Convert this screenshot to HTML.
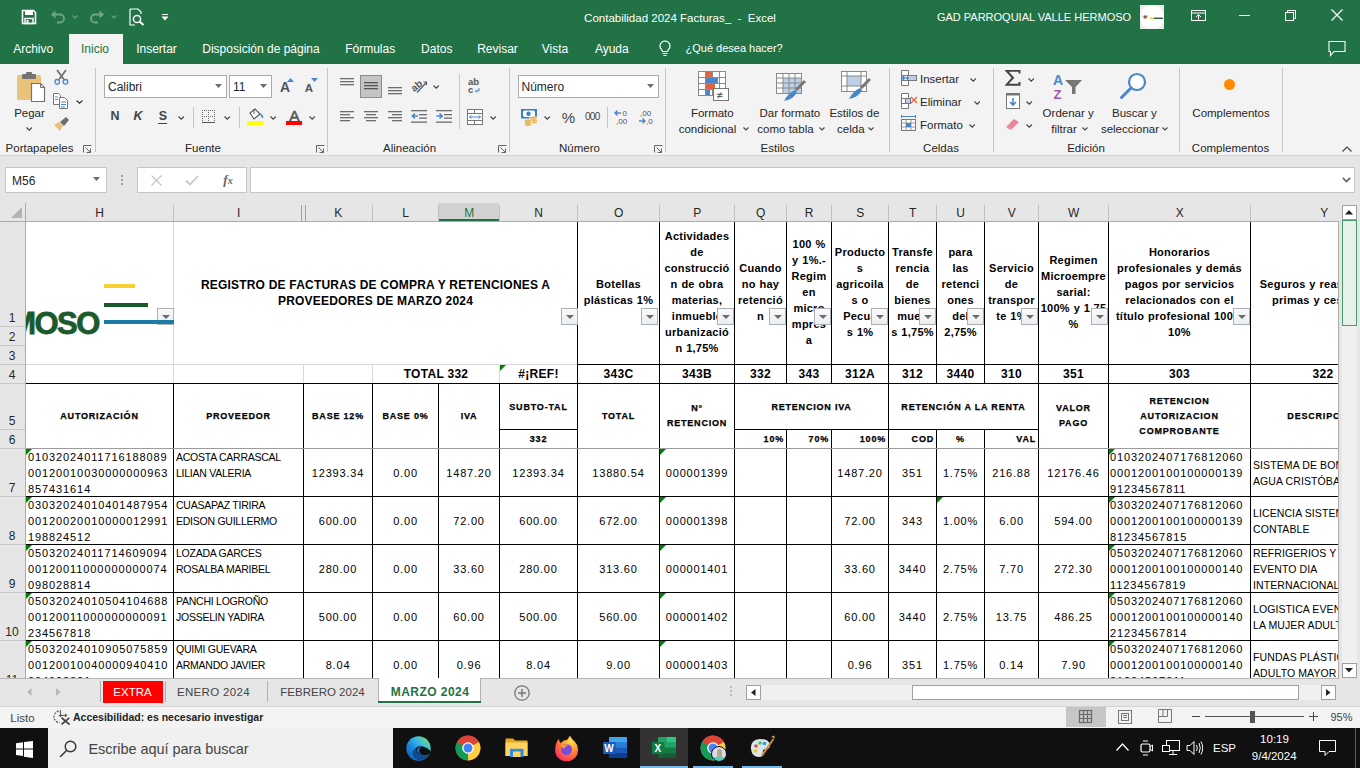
<!DOCTYPE html><html><head><meta charset="utf-8"><style>
*{margin:0;padding:0;box-sizing:border-box}
html,body{width:1360px;height:768px;overflow:hidden;background:#fff;font-family:"Liberation Sans",sans-serif;-webkit-font-smoothing:antialiased}
body{position:relative}
.a{position:absolute}
.t{position:absolute;white-space:nowrap;line-height:1}
.hl{position:absolute;height:1px}
.vl{position:absolute;width:1px}
.cell{position:absolute;display:flex;flex-direction:column;justify-content:center;overflow:hidden}
.cell div{white-space:nowrap}
.ctr{align-items:center;text-align:center}
.rgt{align-items:flex-end;text-align:right}
.lft{align-items:flex-start;text-align:left}
.hb{font-weight:bold;font-size:10px;color:#000}
.dd{position:absolute;width:17px;height:17px;background:linear-gradient(#fafafa,#eceef2);border:1px solid #a9b0b8}
.dd:after{content:"";position:absolute;left:4px;top:6px;border-left:4px solid transparent;border-right:4px solid transparent;border-top:4px solid #6d6d6d}
.tt{font-weight:bold;font-size:12px;letter-spacing:0.2px;color:#000}
.h1{font-weight:bold;font-size:11px;color:#000;letter-spacing:0.25px;word-spacing:0.5px}
.h4{font-weight:bold;font-size:12px;letter-spacing:0.3px;color:#000}
.h5{font-weight:bold;font-size:9px;letter-spacing:0.8px;color:#000;-webkit-text-stroke:0.25px #000}
.dd1{font-size:11px;letter-spacing:0.9px;color:#000}
.dn{font-size:10.5px;letter-spacing:-0.25px;color:#000}
.dv{font-size:11px;letter-spacing:0.8px;color:#000}
.tri{position:absolute;width:0;height:0;border-top:6px solid #008000;border-right:6px solid transparent}
</style></head><body>
<div class="a" style="left:0;top:0;width:1360px;height:64px;background:#217346"></div>
<div class="a" style="left:0;top:64px;width:1360px;height:92px;background:#f3f3f3"></div>
<div class="a" style="left:0;top:156px;width:1360px;height:47px;background:#e6e6e6"></div>
<div class="a" style="left:0;top:155px;width:1360px;height:1px;background:#d5d5d5"></div>
<svg class="a" style="left:21px;top:9px" width="16" height="16" viewBox="0 0 16 16"><path d="M1.5 1.5 H12.5 L14.5 3.5 V14.5 H1.5 Z" fill="none" stroke="#fff" stroke-width="1.6"/><rect x="4" y="1.5" width="8" height="4.5" fill="#fff"/><rect x="4" y="9.5" width="8" height="5" fill="none" stroke="#fff" stroke-width="1.4"/><rect x="5.5" y="11" width="2" height="3.5" fill="#fff"/></svg><svg class="a" style="left:50px;top:9px" width="16" height="15" viewBox="0 0 16 15"><path d="M3 5.5 H10 A4 4 0 0 1 10 13.5 H7" fill="none" stroke="#6fa584" stroke-width="1.8"/><path d="M1 5.5 L5.5 1.5 V9.5 Z" fill="#6fa584"/></svg><svg class="a" style="left:72px;top:15px" width="6" height="4" viewBox="0 0 6 4"><path d="M0.5 0.5 L3.0 3 L5.5 0.5" fill="none" stroke="#6fa584" stroke-width="1.1"/></svg><svg class="a" style="left:89px;top:9px" width="16" height="15" viewBox="0 0 16 15"><path d="M13 5.5 H6 A4 4 0 0 0 6 13.5 H9" fill="none" stroke="#6fa584" stroke-width="1.8"/><path d="M15 5.5 L10.5 1.5 V9.5 Z" fill="#6fa584"/></svg><svg class="a" style="left:111px;top:15px" width="6" height="4" viewBox="0 0 6 4"><path d="M0.5 0.5 L3.0 3 L5.5 0.5" fill="none" stroke="#6fa584" stroke-width="1.1"/></svg><svg class="a" style="left:129px;top:8px" width="16" height="18" viewBox="0 0 16 18"><path d="M1 1 H9 L12 4 V6" fill="none" stroke="#fff" stroke-width="1.2"/><path d="M1 1 V17 H6" fill="none" stroke="#fff" stroke-width="1.2"/><circle cx="8" cy="11" r="3.6" fill="none" stroke="#fff" stroke-width="1.5"/><path d="M10.5 13.5 L14.5 17" stroke="#fff" stroke-width="1.8"/></svg><div class="a" style="left:162px;top:14px;width:6px;height:1px;background:#fff;"></div><svg class="a" style="left:161px;top:16px" width="8" height="5" viewBox="0 0 8 5"><path d="M0.5 0.5 H7.5 L4 4.5 Z" fill="#fff"/></svg><div class="t" style="left:480px;width:400px;text-align:center;top:9.5px;line-height:16px;font-size:11.5px;color:#fff;font-weight:normal;letter-spacing:0px;">Contabilidad 2024 Facturas_&nbsp; -&nbsp; Excel</div><div class="t" style="left:834px;width:400px;text-align:center;top:10.0px;line-height:15px;font-size:11px;color:#fff;font-weight:normal;letter-spacing:0px;">GAD PARROQUIAL VALLE HERMOSO</div><div class="a" style="left:1140px;top:5px;width:24px;height:24px;background:#ececec;"></div><div class="a" style="left:1140px;top:5px;width:24px;height:24px;border-radius:50%;background:#fff"></div><svg class="a" style="left:1141px;top:14px" width="23" height="7" viewBox="0 0 23 7"><circle cx="4.3" cy="3" r="1.8" fill="#a0522d"/><path d="M1 1 Q1.5 4 4 4.5 Q6.5 4 7 1" fill="none" stroke="#8fb79a" stroke-width="0.7"/><rect x="9" y="3.6" width="4" height="1.3" fill="#f5c518"/><rect x="13" y="3.6" width="9" height="1.3" fill="#1a4d2a"/></svg><svg class="a" style="left:1191px;top:10px" width="15" height="11" viewBox="0 0 15 11"><rect x="0.5" y="0.5" width="14" height="10" fill="none" stroke="#fff"/><path d="M0.5 3 H14.5" stroke="#fff"/><path d="M7.5 9.5 V5 M5 7 L7.5 4.5 L10 7" fill="none" stroke="#fff"/></svg><div class="a" style="left:1239px;top:15px;width:11px;height:1px;background:#fff;"></div><svg class="a" style="left:1285px;top:10px" width="12" height="11" viewBox="0 0 12 11"><rect x="0.5" y="2.5" width="8" height="8" fill="none" stroke="#fff"/><path d="M2.5 2.5 V0.5 H10.5 V8.5 H8.5" fill="none" stroke="#fff"/></svg><svg class="a" style="left:1331px;top:9px" width="12" height="12" viewBox="0 0 12 12"><path d="M0.5 0.5 L11.5 11.5 M11.5 0.5 L0.5 11.5" stroke="#fff" stroke-width="1.2"/></svg><div class="a" style="left:69px;top:34px;width:54px;height:30px;background:#f3f3f3;"></div><div class="t" style="left:-166.8px;width:400px;text-align:center;top:40.5px;line-height:16px;font-size:12px;color:#fff;font-weight:normal;letter-spacing:0px;">Archivo</div><div class="t" style="left:-105px;width:400px;text-align:center;top:40.5px;line-height:16px;font-size:12px;color:#217346;font-weight:normal;letter-spacing:0px;">Inicio</div><div class="t" style="left:-43.5px;width:400px;text-align:center;top:40.5px;line-height:16px;font-size:12px;color:#fff;font-weight:normal;letter-spacing:0px;">Insertar</div><div class="t" style="left:61px;width:400px;text-align:center;top:40.5px;line-height:16px;font-size:12px;color:#fff;font-weight:normal;letter-spacing:0px;">Disposición de página</div><div class="t" style="left:170.2px;width:400px;text-align:center;top:40.5px;line-height:16px;font-size:12px;color:#fff;font-weight:normal;letter-spacing:0px;">Fórmulas</div><div class="t" style="left:236.8px;width:400px;text-align:center;top:40.5px;line-height:16px;font-size:12px;color:#fff;font-weight:normal;letter-spacing:0px;">Datos</div><div class="t" style="left:297.5px;width:400px;text-align:center;top:40.5px;line-height:16px;font-size:12px;color:#fff;font-weight:normal;letter-spacing:0px;">Revisar</div><div class="t" style="left:355px;width:400px;text-align:center;top:40.5px;line-height:16px;font-size:12px;color:#fff;font-weight:normal;letter-spacing:0px;">Vista</div><div class="t" style="left:411.79999999999995px;width:400px;text-align:center;top:40.5px;line-height:16px;font-size:12px;color:#fff;font-weight:normal;letter-spacing:0px;">Ayuda</div><svg class="a" style="left:659px;top:40px" width="12" height="17" viewBox="0 0 12 17"><path d="M6 1 A5 5 0 0 1 9.5 9.5 L8.5 11.5 H3.5 L2.5 9.5 A5 5 0 0 1 6 1 Z" fill="none" stroke="#fff" stroke-width="1.2"/><path d="M3.5 13.5 H8.5 M4.5 15.5 H7.5" stroke="#fff" stroke-width="1.2"/></svg><div class="t" style="left:685.5px;top:41.0px;line-height:15px;font-size:11px;color:#fff;font-weight:normal;letter-spacing:0px;">¿Qué desea hacer?</div><svg class="a" style="left:1328px;top:40px" width="18" height="17" viewBox="0 0 18 17"><path d="M1 1.5 H17 V11.5 H6 L2.5 15.5 V11.5 H1 Z" fill="none" stroke="#fff" stroke-width="1.1"/></svg>
<div class="a" style="left:95px;top:68px;width:1px;height:84px;background:#c6c6c6;"></div><div class="a" style="left:327px;top:68px;width:1px;height:84px;background:#c6c6c6;"></div><div class="a" style="left:509px;top:68px;width:1px;height:84px;background:#c6c6c6;"></div><div class="a" style="left:665px;top:68px;width:1px;height:84px;background:#c6c6c6;"></div><div class="a" style="left:889px;top:68px;width:1px;height:84px;background:#c6c6c6;"></div><div class="a" style="left:993px;top:68px;width:1px;height:84px;background:#c6c6c6;"></div><div class="a" style="left:1179px;top:68px;width:1px;height:84px;background:#c6c6c6;"></div><div class="a" style="left:1282px;top:68px;width:1px;height:84px;background:#c6c6c6;"></div><div class="t" style="left:-160.5px;width:400px;text-align:center;top:140.0px;line-height:16px;font-size:11.5px;color:#262626;font-weight:normal;letter-spacing:0px;">Portapapeles</div><div class="t" style="left:3px;width:400px;text-align:center;top:140.0px;line-height:16px;font-size:11.5px;color:#262626;font-weight:normal;letter-spacing:0px;">Fuente</div><div class="t" style="left:209.60000000000002px;width:400px;text-align:center;top:140.0px;line-height:16px;font-size:11.5px;color:#262626;font-weight:normal;letter-spacing:0px;">Alineación</div><div class="t" style="left:379.5px;width:400px;text-align:center;top:140.0px;line-height:16px;font-size:11.5px;color:#262626;font-weight:normal;letter-spacing:0px;">Número</div><div class="t" style="left:577.5px;width:400px;text-align:center;top:140.0px;line-height:16px;font-size:11.5px;color:#262626;font-weight:normal;letter-spacing:0px;">Estilos</div><div class="t" style="left:741px;width:400px;text-align:center;top:140.0px;line-height:16px;font-size:11.5px;color:#262626;font-weight:normal;letter-spacing:0px;">Celdas</div><div class="t" style="left:886px;width:400px;text-align:center;top:140.0px;line-height:16px;font-size:11.5px;color:#262626;font-weight:normal;letter-spacing:0px;">Edición</div><div class="t" style="left:1030.5px;width:400px;text-align:center;top:140.0px;line-height:16px;font-size:11.5px;color:#262626;font-weight:normal;letter-spacing:0px;">Complementos</div><svg class="a" style="left:83px;top:145px" width="9" height="8" viewBox="0 0 9 8"><path d="M0.5 7.5 V0.5 H8.5" fill="none" stroke="#666"/><path d="M2.5 2.5 L7.5 7.5 M7.5 3.5 V7.5 H3.5" fill="none" stroke="#666"/></svg><svg class="a" style="left:316px;top:145px" width="9" height="8" viewBox="0 0 9 8"><path d="M0.5 7.5 V0.5 H8.5" fill="none" stroke="#666"/><path d="M2.5 2.5 L7.5 7.5 M7.5 3.5 V7.5 H3.5" fill="none" stroke="#666"/></svg><svg class="a" style="left:498px;top:145px" width="9" height="8" viewBox="0 0 9 8"><path d="M0.5 7.5 V0.5 H8.5" fill="none" stroke="#666"/><path d="M2.5 2.5 L7.5 7.5 M7.5 3.5 V7.5 H3.5" fill="none" stroke="#666"/></svg><svg class="a" style="left:654px;top:145px" width="9" height="8" viewBox="0 0 9 8"><path d="M0.5 7.5 V0.5 H8.5" fill="none" stroke="#666"/><path d="M2.5 2.5 L7.5 7.5 M7.5 3.5 V7.5 H3.5" fill="none" stroke="#666"/></svg><svg class="a" style="left:1342px;top:146px" width="10" height="6" viewBox="0 0 10 6"><path d="M0.5 5.5 L5 1 L9.5 5.5" fill="none" stroke="#444" stroke-width="1.2"/></svg><svg class="a" style="left:16px;top:72px" width="30" height="31" viewBox="0 0 30 31"><rect x="1" y="3" width="24" height="25" rx="1.5" fill="#ebc27a"/><rect x="6" y="2" width="14" height="5" rx="1" fill="#737373"/><rect x="10" y="0" width="6" height="4" rx="1" fill="#737373"/><path d="M15.5 11.5 H24.5 L28.5 15.5 V29.5 H15.5 Z" fill="#fff" stroke="#737373" stroke-width="1.2"/><path d="M24.5 11.5 V15.5 H28.5" fill="none" stroke="#737373" stroke-width="1"/></svg><div class="t" style="left:-170.5px;width:400px;text-align:center;top:104.6px;line-height:16px;font-size:11.5px;color:#262626;font-weight:normal;letter-spacing:0px;">Pegar</div><svg class="a" style="left:25.5px;top:126.5px" width="6.5" height="4.2" viewBox="0 0 6.5 4.2"><path d="M0.5 0.5 L3.25 3.2 L6.0 0.5" fill="none" stroke="#444" stroke-width="1.1"/></svg><svg class="a" style="left:54px;top:69px" width="15" height="16" viewBox="0 0 15 16"><path d="M3 1 L10 10.5 M12 1 L5 10.5" stroke="#6d6d6d" stroke-width="1.7"/><circle cx="3.2" cy="12.8" r="2.3" fill="none" stroke="#4a86c8" stroke-width="1.3"/><circle cx="11.5" cy="12.8" r="2.3" fill="none" stroke="#4a86c8" stroke-width="1.3"/></svg><svg class="a" style="left:53px;top:93px" width="16" height="16" viewBox="0 0 16 16"><path d="M0.5 0.5 H5.5 L7.5 2.5 V11.5 H0.5 Z" fill="#fff" stroke="#777"/><path d="M6.5 4.5 H11.5 L14.5 7.5 V15.5 H6.5 Z" fill="#fff" stroke="#777"/><path d="M2 4 H5 M2 6.5 H5 M8 9 H13 M8 11.5 H13 M8 14 H12" stroke="#4a86c8" stroke-width="1"/></svg><svg class="a" style="left:75.5px;top:99.5px" width="7" height="4.2" viewBox="0 0 7 4.2"><path d="M0.5 0.5 L3.5 3.2 L6.5 0.5" fill="none" stroke="#333" stroke-width="1.1"/></svg><svg class="a" style="left:53px;top:116px" width="17" height="15" viewBox="0 0 17 15"><path d="M1 9 L6 6 L10 10 L7 15 Z" fill="#e8c07a"/><path d="M7 6 L13 1 L16 4 L11 10 Z" fill="#6d6d6d"/></svg><div class="a" style="left:104px;top:75px;width:123px;height:23px;background:#fff;border:1px solid #ababab"></div><div class="t" style="left:108px;top:78.5px;line-height:16px;font-size:12px;color:#262626;font-weight:normal;letter-spacing:0px;">Calibri</div><svg class="a" style="left:215px;top:84px" width="8" height="5" viewBox="0 0 8 5"><path d="M0 0 H7 L3.5 4 Z" fill="#6d6d6d"/></svg><div class="a" style="left:229px;top:75px;width:43px;height:23px;background:#fff;border:1px solid #ababab"></div><div class="t" style="left:233px;top:78.5px;line-height:16px;font-size:12px;color:#262626;font-weight:normal;letter-spacing:0px;">11</div><svg class="a" style="left:260px;top:84px" width="8" height="5" viewBox="0 0 8 5"><path d="M0 0 H7 L3.5 4 Z" fill="#6d6d6d"/></svg><div class="t" style="left:85px;width:400px;text-align:center;top:77.5px;line-height:19px;font-size:14px;color:#555;font-weight:normal;letter-spacing:0px;font-weight:bold;">A</div><svg class="a" style="left:287px;top:78px" width="7" height="4" viewBox="0 0 7 4"><path d="M0 4 L3.5 0 L7 4 Z" fill="#4a86c8"/></svg><div class="t" style="left:108.80000000000001px;width:400px;text-align:center;top:80.0px;line-height:16px;font-size:11.5px;color:#555;font-weight:normal;letter-spacing:0px;font-weight:bold;">A</div><svg class="a" style="left:311px;top:78px" width="7" height="4" viewBox="0 0 7 4"><path d="M0 0 L3.5 4 L7 0 Z" fill="#4a86c8"/></svg><div class="t" style="left:-85px;width:400px;text-align:center;top:108.0px;line-height:17px;font-size:12.5px;color:#444;font-weight:bold;letter-spacing:0px;">N</div><div class="t" style="left:-62px;width:400px;text-align:center;top:108.0px;line-height:17px;font-size:12.5px;color:#444;font-weight:bold;letter-spacing:0px;font-style:italic;">K</div><div class="t" style="left:-37px;width:400px;text-align:center;top:107.5px;line-height:17px;font-size:12.5px;color:#444;font-weight:bold;letter-spacing:0px;">S</div><div class="a" style="left:158px;top:123px;width:9px;height:1px;background:#444;"></div><svg class="a" style="left:178px;top:115.5px" width="6.5" height="4.2" viewBox="0 0 6.5 4.2"><path d="M0.5 0.5 L3.25 3.2 L6.0 0.5" fill="none" stroke="#444" stroke-width="1.1"/></svg><div class="a" style="left:193px;top:107px;width:1px;height:21px;background:#c6c6c6;"></div><svg class="a" style="left:202px;top:110px" width="14" height="14" viewBox="0 0 14 14"><rect x="0" y="0" width="1" height="1" fill="#6a6a6a"/><rect x="0" y="2" width="1" height="1" fill="#6a6a6a"/><rect x="0" y="4" width="1" height="1" fill="#6a6a6a"/><rect x="0" y="6" width="1" height="1" fill="#6a6a6a"/><rect x="0" y="8" width="1" height="1" fill="#6a6a6a"/><rect x="0" y="10" width="1" height="1" fill="#6a6a6a"/><rect x="2" y="0" width="1" height="1" fill="#6a6a6a"/><rect x="2" y="6" width="1" height="1" fill="#6a6a6a"/><rect x="4" y="0" width="1" height="1" fill="#6a6a6a"/><rect x="4" y="6" width="1" height="1" fill="#6a6a6a"/><rect x="6" y="0" width="1" height="1" fill="#6a6a6a"/><rect x="6" y="2" width="1" height="1" fill="#6a6a6a"/><rect x="6" y="4" width="1" height="1" fill="#6a6a6a"/><rect x="6" y="6" width="1" height="1" fill="#6a6a6a"/><rect x="6" y="8" width="1" height="1" fill="#6a6a6a"/><rect x="6" y="10" width="1" height="1" fill="#6a6a6a"/><rect x="8" y="0" width="1" height="1" fill="#6a6a6a"/><rect x="8" y="6" width="1" height="1" fill="#6a6a6a"/><rect x="10" y="0" width="1" height="1" fill="#6a6a6a"/><rect x="10" y="6" width="1" height="1" fill="#6a6a6a"/><rect x="12" y="0" width="1" height="1" fill="#6a6a6a"/><rect x="12" y="2" width="1" height="1" fill="#6a6a6a"/><rect x="12" y="4" width="1" height="1" fill="#6a6a6a"/><rect x="12" y="6" width="1" height="1" fill="#6a6a6a"/><rect x="12" y="8" width="1" height="1" fill="#6a6a6a"/><rect x="12" y="10" width="1" height="1" fill="#6a6a6a"/><rect x="0" y="12" width="13" height="1" fill="#555"/></svg><svg class="a" style="left:223.5px;top:115.5px" width="6.5" height="4.2" viewBox="0 0 6.5 4.2"><path d="M0.5 0.5 L3.25 3.2 L6.0 0.5" fill="none" stroke="#444" stroke-width="1.1"/></svg><div class="a" style="left:239px;top:107px;width:1px;height:21px;background:#c6c6c6;"></div><svg class="a" style="left:246px;top:108px" width="18" height="17" viewBox="0 0 18 17"><path d="M4 5 L9 1 L14 6 L8 11 Z" fill="#fff" stroke="#555" stroke-width="1.1"/><path d="M8 1 V6" stroke="#555"/><path d="M14 6 Q17 7 16.5 10" fill="#4a86c8" stroke="#4a86c8" stroke-width="1.3"/><rect x="1" y="13" width="16" height="4" fill="#ffff00"/></svg><svg class="a" style="left:269.5px;top:115.5px" width="6.5" height="4.2" viewBox="0 0 6.5 4.2"><path d="M0.5 0.5 L3.25 3.2 L6.0 0.5" fill="none" stroke="#444" stroke-width="1.1"/></svg><div class="t" style="left:94.5px;width:400px;text-align:center;top:105.0px;line-height:21px;font-size:15.5px;color:#555;font-weight:normal;letter-spacing:0px;-webkit-text-stroke:0.5px #555;">A</div><div class="a" style="left:286px;top:121px;width:16px;height:4px;background:#ff0000;"></div><svg class="a" style="left:308.5px;top:115.5px" width="6.5" height="4.2" viewBox="0 0 6.5 4.2"><path d="M0.5 0.5 L3.25 3.2 L6.0 0.5" fill="none" stroke="#444" stroke-width="1.1"/></svg><svg class="a" style="left:340px;top:78px" width="16" height="10" viewBox="0 0 16 10"><rect x="0" y="0" width="14" height="1.3" fill="#6d6d6d"/><rect x="0" y="3" width="14" height="1.3" fill="#6d6d6d"/><rect x="0" y="6" width="14" height="1.3" fill="#6d6d6d"/></svg><div class="a" style="left:360px;top:75px;width:22px;height:23px;background:#c5c5c5;border:1px solid #8d8d8d"></div><svg class="a" style="left:364px;top:82px" width="16" height="10" viewBox="0 0 16 10"><rect x="0" y="0" width="14" height="1.3" fill="#555"/><rect x="0" y="3" width="14" height="1.3" fill="#555"/><rect x="0" y="6" width="14" height="1.3" fill="#555"/></svg><svg class="a" style="left:388px;top:87px" width="16" height="10" viewBox="0 0 16 10"><rect x="0" y="0" width="14" height="1.3" fill="#6d6d6d"/><rect x="0" y="3" width="14" height="1.3" fill="#6d6d6d"/><rect x="0" y="6" width="14" height="1.3" fill="#6d6d6d"/></svg><svg class="a" style="left:411px;top:78px" width="18" height="16" viewBox="0 0 18 16"><text x="0" y="11" font-family="Liberation Sans" font-size="10" font-weight="bold" fill="#555" transform="rotate(-40 6 8)">ab</text><path d="M6 14.5 L15.5 4.5 M12.5 4 H15.5 V7" fill="none" stroke="#555" stroke-width="1.1"/></svg><svg class="a" style="left:432.5px;top:85px" width="6.5" height="4.2" viewBox="0 0 6.5 4.2"><path d="M0.5 0.5 L3.25 3.2 L6.0 0.5" fill="none" stroke="#444" stroke-width="1.1"/></svg><div class="a" style="left:459px;top:74px;width:1px;height:55px;background:#c6c6c6;"></div><svg class="a" style="left:468px;top:78px" width="14" height="16" viewBox="0 0 14 16"><text x="0" y="7" font-family="Liberation Sans" font-weight="bold" font-size="9.5" fill="#555">ab</text><text x="0" y="14.5" font-family="Liberation Sans" font-weight="bold" font-size="9.5" fill="#555">c</text><path d="M11 10 V13 H7.5 M9 11.5 L7.5 13 L9 14.5" fill="none" stroke="#4a86c8" stroke-width="1"/></svg><svg class="a" style="left:340px;top:111px" width="16" height="13" viewBox="0 0 16 13"><rect x="0" y="0" width="14" height="1.3" fill="#6d6d6d"/><rect x="0" y="3" width="10" height="1.3" fill="#6d6d6d"/><rect x="0" y="6" width="14" height="1.3" fill="#6d6d6d"/><rect x="0" y="9" width="10" height="1.3" fill="#6d6d6d"/></svg><svg class="a" style="left:364px;top:111px" width="16" height="13" viewBox="0 0 16 13"><rect x="0" y="0" width="14" height="1.3" fill="#6d6d6d"/><rect x="2" y="3" width="10" height="1.3" fill="#6d6d6d"/><rect x="0" y="6" width="14" height="1.3" fill="#6d6d6d"/><rect x="2" y="9" width="10" height="1.3" fill="#6d6d6d"/></svg><svg class="a" style="left:388px;top:111px" width="16" height="13" viewBox="0 0 16 13"><rect x="0" y="0" width="14" height="1.3" fill="#6d6d6d"/><rect x="4" y="3" width="10" height="1.3" fill="#6d6d6d"/><rect x="0" y="6" width="14" height="1.3" fill="#6d6d6d"/><rect x="4" y="9" width="10" height="1.3" fill="#6d6d6d"/></svg><svg class="a" style="left:411px;top:110px" width="17" height="13" viewBox="0 0 17 13"><rect x="0" y="0" width="16" height="1.3" fill="#6d6d6d"/><rect x="8" y="4" width="8" height="1.3" fill="#6d6d6d"/><rect x="8" y="7.5" width="8" height="1.3" fill="#6d6d6d"/><rect x="0" y="11.5" width="16" height="1.3" fill="#6d6d6d"/><path d="M1 6 H7 M4 3.5 L1.3 6 L4 8.5" fill="none" stroke="#4a86c8" stroke-width="1.6"/></svg><svg class="a" style="left:436px;top:110px" width="17" height="13" viewBox="0 0 17 13"><rect x="0" y="0" width="16" height="1.3" fill="#6d6d6d"/><rect x="8" y="4" width="8" height="1.3" fill="#6d6d6d"/><rect x="8" y="7.5" width="8" height="1.3" fill="#6d6d6d"/><rect x="0" y="11.5" width="16" height="1.3" fill="#6d6d6d"/><path d="M0.5 6 H6.5 M3.5 3.5 L6.2 6 L3.5 8.5" fill="none" stroke="#4a86c8" stroke-width="1.6"/></svg><svg class="a" style="left:467px;top:109px" width="16" height="16" viewBox="0 0 16 16"><rect x="0.5" y="0.5" width="15" height="15" fill="#fff" stroke="#777"/><path d="M0.5 4.5 H15.5 M0.5 11.5 H15.5 M7.5 0.5 V4.5 M7.5 11.5 V15.5" stroke="#777"/><path d="M2.5 8 H13.5 M4.5 6.3 L2.5 8 L4.5 9.7 M11.5 6.3 L13.5 8 L11.5 9.7" fill="none" stroke="#4a86c8" stroke-width="1"/></svg><svg class="a" style="left:489.5px;top:115.5px" width="6.5" height="4.2" viewBox="0 0 6.5 4.2"><path d="M0.5 0.5 L3.25 3.2 L6.0 0.5" fill="none" stroke="#444" stroke-width="1.1"/></svg><div class="a" style="left:518px;top:75px;width:141px;height:23px;background:#fff;border:1px solid #ababab"></div><div class="t" style="left:521.5px;top:78.5px;line-height:16px;font-size:12px;color:#262626;font-weight:normal;letter-spacing:0px;">Número</div><svg class="a" style="left:647px;top:84px" width="8" height="5" viewBox="0 0 8 5"><path d="M0 0 H7 L3.5 4 Z" fill="#6d6d6d"/></svg><svg class="a" style="left:520px;top:108px" width="18" height="18" viewBox="0 0 18 18"><rect x="1" y="1" width="16" height="9.5" fill="#3f7fc4"/><path d="M3 3.5 Q4 2.8 4.5 2.5 H13.5 Q14 3.2 15 3.5 V8 Q14 8.3 13.5 9 H4.5 Q4 8.3 3 8 Z" fill="#fff"/><circle cx="8.5" cy="5.8" r="2.2" fill="#3f7fc4"/><rect x="9.5" y="8.5" width="8" height="8" fill="#f3f3f3"/><ellipse cx="13.5" cy="10" rx="3.6" ry="1.4" fill="#e8b866"/><ellipse cx="13.5" cy="12.3" rx="3.6" ry="1.1" fill="#e8b866"/><ellipse cx="13.5" cy="14.3" rx="3.6" ry="1.1" fill="#e8b866"/><rect x="5" y="12" width="7" height="6" fill="#f3f3f3"/><ellipse cx="8" cy="13" rx="3.4" ry="1.4" fill="#e8b866"/><ellipse cx="8" cy="15.2" rx="3.4" ry="1.1" fill="#e8b866"/><ellipse cx="8" cy="17" rx="3.4" ry="1" fill="#e8b866"/></svg><svg class="a" style="left:543.5px;top:115.5px" width="6.5" height="4.2" viewBox="0 0 6.5 4.2"><path d="M0.5 0.5 L3.25 3.2 L6.0 0.5" fill="none" stroke="#444" stroke-width="1.1"/></svg><div class="t" style="left:368.5px;width:400px;text-align:center;top:106.5px;line-height:21px;font-size:15px;color:#444;font-weight:normal;letter-spacing:0px;">%</div><div class="t" style="left:392.29999999999995px;width:400px;text-align:center;top:109.6px;line-height:14px;font-size:10px;color:#444;font-weight:normal;letter-spacing:-0.7px;">000</div><div class="a" style="left:607px;top:107px;width:1px;height:21px;background:#c6c6c6;"></div><svg class="a" style="left:614px;top:109px" width="17" height="16" viewBox="0 0 17 16"><path d="M1 4 H7 M3.5 1.5 L1 4 L3.5 6.5" fill="none" stroke="#4a86c8" stroke-width="1.4"/><text x="8.5" y="7" font-family="Liberation Sans" font-size="8" fill="#555">0</text><text x="2" y="15" font-family="Liberation Sans" font-size="8" fill="#555">,00</text></svg><svg class="a" style="left:638px;top:109px" width="17" height="16" viewBox="0 0 17 16"><text x="2" y="7" font-family="Liberation Sans" font-size="8" fill="#555">,00</text><path d="M1 12 H7 M4.5 9.5 L7 12 L4.5 14.5" fill="none" stroke="#4a86c8" stroke-width="1.4"/><text x="8" y="15" font-family="Liberation Sans" font-size="8" fill="#555">,0</text></svg><svg class="a" style="left:698px;top:71px" width="32" height="31" viewBox="0 0 32 31"><rect x="0.5" y="0.5" width="27" height="24" fill="#fff" stroke="#8a8a8a"/><path d="M0.5 6.5 H27.5 M0.5 12.5 H27.5 M0.5 18.5 H27.5 M7.5 0.5 V24.5 M14.5 0.5 V24.5 M21.5 0.5 V24.5" stroke="#8a8a8a"/><rect x="8" y="1" width="6" height="5" fill="#e0643c"/><rect x="8" y="7" width="12" height="5" fill="#4a86c8"/><rect x="8" y="13" width="9" height="5" fill="#e0643c"/><rect x="8" y="19" width="4" height="5" fill="#4a86c8"/><rect x="15.5" y="17.5" width="15" height="12" fill="#fff" stroke="#777"/><text x="18.5" y="27.5" font-family="Liberation Sans" font-size="11" fill="#444">≠</text></svg><div class="t" style="left:512.3px;width:400px;text-align:center;top:105.4px;line-height:16px;font-size:11.5px;color:#262626;font-weight:normal;letter-spacing:0px;">Formato</div><div class="t" style="left:507.5px;width:400px;text-align:center;top:120.80000000000001px;line-height:16px;font-size:11.5px;color:#262626;font-weight:normal;letter-spacing:0px;">condicional</div><svg class="a" style="left:742.5px;top:127px" width="6" height="4" viewBox="0 0 6 4"><path d="M0.5 0.5 L3.0 3 L5.5 0.5" fill="none" stroke="#444" stroke-width="1.1"/></svg><svg class="a" style="left:776px;top:73px" width="31" height="30" viewBox="0 0 31 30"><rect x="0.5" y="0.5" width="25" height="20" fill="#fff" stroke="#8a8a8a"/><rect x="7" y="5" width="18" height="15" fill="#bcd0e8"/><path d="M0.5 5 H25.5 M0.5 10 H25.5 M0.5 15 H25.5 M7 0.5 V20.5 M13 0.5 V20.5 M19 0.5 V20.5" stroke="#8a8a8a"/><path d="M19 16 L28 7 L30 9 L21 18 Z" fill="#777"/><path d="M8 28 Q12 20 19 17 L21 19 Q18 26 8 28 Z" fill="#4a86c8"/></svg><div class="t" style="left:589.9px;width:400px;text-align:center;top:105.4px;line-height:16px;font-size:11.5px;color:#262626;font-weight:normal;letter-spacing:0px;">Dar formato</div><div class="t" style="left:585.5px;width:400px;text-align:center;top:120.80000000000001px;line-height:16px;font-size:11.5px;color:#262626;font-weight:normal;letter-spacing:0px;">como tabla</div><svg class="a" style="left:818.5px;top:127px" width="6" height="4" viewBox="0 0 6 4"><path d="M0.5 0.5 L3.0 3 L5.5 0.5" fill="none" stroke="#444" stroke-width="1.1"/></svg><svg class="a" style="left:841px;top:71px" width="31" height="30" viewBox="0 0 31 30"><rect x="0.5" y="0.5" width="25" height="20" fill="#fff" stroke="#8a8a8a"/><rect x="6" y="5" width="14" height="10" fill="#bcd0e8"/><path d="M0.5 5 H25.5 M0.5 15 H25.5 M6 0.5 V20.5 M20 0.5 V20.5" stroke="#8a8a8a"/><path d="M19 16 L28 7 L30 9 L21 18 Z" fill="#777"/><path d="M8 28 Q12 20 19 17 L21 19 Q18 26 8 28 Z" fill="#4a86c8"/></svg><div class="t" style="left:654.4px;width:400px;text-align:center;top:105.4px;line-height:16px;font-size:11.5px;color:#262626;font-weight:normal;letter-spacing:0px;">Estilos de</div><div class="t" style="left:650.8px;width:400px;text-align:center;top:120.80000000000001px;line-height:16px;font-size:11.5px;color:#262626;font-weight:normal;letter-spacing:0px;">celda</div><svg class="a" style="left:868px;top:127px" width="6" height="4" viewBox="0 0 6 4"><path d="M0.5 0.5 L3.0 3 L5.5 0.5" fill="none" stroke="#444" stroke-width="1.1"/></svg><svg class="a" style="left:901px;top:70px" width="17" height="17" viewBox="0 0 17 17"><path d="M0.5 0.5 H7.5 V15.5 H0.5 Z M0.5 5.5 H7.5 M0.5 10.5 H7.5" fill="#fff" stroke="#777"/><rect x="6.5" y="5.5" width="9" height="5" fill="#bcd0e8" stroke="#777"/><path d="M1 8 H8 M3.5 5.5 L1 8 L3.5 10.5" fill="none" stroke="#4a86c8" stroke-width="1.3"/></svg><div class="t" style="left:920px;top:71.0px;line-height:16px;font-size:11.5px;color:#262626;font-weight:normal;letter-spacing:0px;">Insertar</div><svg class="a" style="left:969.5px;top:77.5px" width="6.5" height="4.2" viewBox="0 0 6.5 4.2"><path d="M0.5 0.5 L3.25 3.2 L6.0 0.5" fill="none" stroke="#444" stroke-width="1.1"/></svg><svg class="a" style="left:901px;top:93px" width="17" height="17" viewBox="0 0 17 17"><path d="M0.5 0.5 H7.5 V15.5 H0.5 Z M0.5 5.5 H7.5 M0.5 10.5 H7.5" fill="#fff" stroke="#777"/><rect x="4.5" y="5.5" width="5" height="5" fill="#bcd0e8" stroke="#777"/><path d="M10 4 L16 10 M16 4 L10 10" stroke="#e0643c" stroke-width="1.3"/></svg><div class="t" style="left:920px;top:94.0px;line-height:16px;font-size:11.5px;color:#262626;font-weight:normal;letter-spacing:0px;">Eliminar</div><svg class="a" style="left:973.5px;top:100.5px" width="6.5" height="4.2" viewBox="0 0 6.5 4.2"><path d="M0.5 0.5 L3.25 3.2 L6.0 0.5" fill="none" stroke="#444" stroke-width="1.1"/></svg><svg class="a" style="left:901px;top:115px" width="16" height="17" viewBox="0 0 16 17"><path d="M0.5 1.5 H14.5 M0.5 0 V3 M14.5 0 V3" stroke="#4a86c8"/><rect x="0.5" y="4.5" width="14" height="11" fill="#fff" stroke="#777"/><path d="M0.5 8 H14.5 M0.5 12 H14.5 M5 4.5 V15.5 M10 4.5 V15.5" stroke="#999"/><rect x="5" y="8" width="5" height="4" fill="#4a86c8"/></svg><div class="t" style="left:920px;top:117.0px;line-height:16px;font-size:11.5px;color:#262626;font-weight:normal;letter-spacing:0px;">Formato</div><svg class="a" style="left:968.5px;top:123.5px" width="6.5" height="4.2" viewBox="0 0 6.5 4.2"><path d="M0.5 0.5 L3.25 3.2 L6.0 0.5" fill="none" stroke="#444" stroke-width="1.1"/></svg><svg class="a" style="left:1005px;top:70px" width="16" height="16" viewBox="0 0 16 16"><path d="M14.5 3.5 V0.8 H1.5 L8 7.8 L1.5 14.8 H14.5 V12" fill="none" stroke="#444" stroke-width="2"/></svg><svg class="a" style="left:1027.5px;top:77.5px" width="6.5" height="4.2" viewBox="0 0 6.5 4.2"><path d="M0.5 0.5 L3.25 3.2 L6.0 0.5" fill="none" stroke="#444" stroke-width="1.1"/></svg><svg class="a" style="left:1006px;top:93px" width="15" height="16" viewBox="0 0 15 16"><rect x="0.5" y="0.5" width="13" height="15" fill="#fff" stroke="#777"/><rect x="0.5" y="0.5" width="13" height="2" fill="#777"/><path d="M7 5 V12 M4 9 L7 12 L10 9" fill="none" stroke="#4a86c8" stroke-width="1.6"/></svg><svg class="a" style="left:1026px;top:100.5px" width="6.5" height="4.2" viewBox="0 0 6.5 4.2"><path d="M0.5 0.5 L3.25 3.2 L6.0 0.5" fill="none" stroke="#444" stroke-width="1.1"/></svg><svg class="a" style="left:1006px;top:117px" width="14" height="13" viewBox="0 0 14 13"><path d="M1 9 L8 2 L13 5 L6 12 Z" fill="#e8869b"/><path d="M1 9 L6 12 L4.5 13 L0 10 Z" fill="#e8869b"/></svg><svg class="a" style="left:1026px;top:123.5px" width="6.5" height="4.2" viewBox="0 0 6.5 4.2"><path d="M0.5 0.5 L3.25 3.2 L6.0 0.5" fill="none" stroke="#444" stroke-width="1.1"/></svg><svg class="a" style="left:1053px;top:73px" width="30" height="27" viewBox="0 0 30 27"><text x="0" y="12" font-family="Liberation Sans" font-weight="bold" font-size="14" fill="#4a86c8">A</text><text x="0.5" y="26" font-family="Liberation Sans" font-weight="bold" font-size="13" fill="#9b59b6">Z</text><path d="M12 7 H29 L22.5 14 V21 H19 V14 Z" fill="#777"/></svg><div class="t" style="left:868.2px;width:400px;text-align:center;top:105.0px;line-height:16px;font-size:11.5px;color:#262626;font-weight:normal;letter-spacing:0px;">Ordenar y</div><div class="t" style="left:864px;width:400px;text-align:center;top:120.80000000000001px;line-height:16px;font-size:11.5px;color:#262626;font-weight:normal;letter-spacing:0px;">filtrar</div><svg class="a" style="left:1082px;top:127px" width="6" height="4" viewBox="0 0 6 4"><path d="M0.5 0.5 L3.0 3 L5.5 0.5" fill="none" stroke="#444" stroke-width="1.1"/></svg><svg class="a" style="left:1119px;top:71px" width="29" height="29" viewBox="0 0 29 29"><circle cx="18" cy="11" r="8" fill="#fff" stroke="#4a86c8" stroke-width="2.2"/><path d="M11.5 17.5 L2.5 26.5" stroke="#4a86c8" stroke-width="3" stroke-linecap="round"/></svg><div class="t" style="left:934.4000000000001px;width:400px;text-align:center;top:105.3px;line-height:16px;font-size:11.5px;color:#262626;font-weight:normal;letter-spacing:0px;">Buscar y</div><div class="t" style="left:930px;width:400px;text-align:center;top:121.0px;line-height:16px;font-size:11.5px;color:#262626;font-weight:normal;letter-spacing:0px;">seleccionar</div><svg class="a" style="left:1162px;top:127px" width="6" height="4" viewBox="0 0 6 4"><path d="M0.5 0.5 L3.0 3 L5.5 0.5" fill="none" stroke="#444" stroke-width="1.1"/></svg><div class="a" style="left:1224px;top:79px;width:11px;height:11px;border-radius:50%;background:#ff8c00"></div><div class="t" style="left:1031px;width:400px;text-align:center;top:105.3px;line-height:16px;font-size:11.5px;color:#262626;font-weight:normal;letter-spacing:0px;">Complementos</div>
<div class="a" style="left:0;top:203px;width:1340px;height:19px;background:#e6e6e6"></div>
<div class="a" style="left:0;top:221px;width:1339px;height:1px;background:#ababab"></div>
<div class="a" style="left:25px;top:203px;width:1px;height:475px;background:#ababab"></div>
<div class="a" style="left:11px;top:207px;width:0;height:0;border-left:11px solid transparent;border-bottom:11px solid #b4b4b4"></div>
<div class="a" style="left:438px;top:203px;width:61px;height:18px;background:#d2d2d2"></div>
<div class="a" style="left:438px;top:219px;width:62px;height:2px;background:#217346"></div>
<div class="a" style="left:173px;top:205px;width:1px;height:16px;background:#c0c0c0"></div>
<div class="t" style="left:79.7px;width:40px;text-align:center;top:207px;font-size:12px;color:#262626">H</div>
<div class="t" style="left:218.7px;width:40px;text-align:center;top:207px;font-size:12px;color:#262626">I</div>
<div class="a" style="left:372px;top:205px;width:1px;height:16px;background:#c0c0c0"></div>
<div class="t" style="left:318.2px;width:40px;text-align:center;top:207px;font-size:12px;color:#262626">K</div>
<div class="a" style="left:438px;top:205px;width:1px;height:16px;background:#c0c0c0"></div>
<div class="t" style="left:385.7px;width:40px;text-align:center;top:207px;font-size:12px;color:#262626">L</div>
<div class="a" style="left:499px;top:205px;width:1px;height:16px;background:#c0c0c0"></div>
<div class="t" style="left:449.2px;width:40px;text-align:center;top:207px;font-size:12px;color:#217346">M</div>
<div class="a" style="left:577px;top:205px;width:1px;height:16px;background:#c0c0c0"></div>
<div class="t" style="left:518.7px;width:40px;text-align:center;top:207px;font-size:12px;color:#262626">N</div>
<div class="a" style="left:659px;top:205px;width:1px;height:16px;background:#c0c0c0"></div>
<div class="t" style="left:598.7px;width:40px;text-align:center;top:207px;font-size:12px;color:#262626">O</div>
<div class="a" style="left:734px;top:205px;width:1px;height:16px;background:#c0c0c0"></div>
<div class="t" style="left:677.2px;width:40px;text-align:center;top:207px;font-size:12px;color:#262626">P</div>
<div class="a" style="left:786px;top:205px;width:1px;height:16px;background:#c0c0c0"></div>
<div class="t" style="left:740.7px;width:40px;text-align:center;top:207px;font-size:12px;color:#262626">Q</div>
<div class="a" style="left:831px;top:205px;width:1px;height:16px;background:#c0c0c0"></div>
<div class="t" style="left:789.2px;width:40px;text-align:center;top:207px;font-size:12px;color:#262626">R</div>
<div class="a" style="left:888px;top:205px;width:1px;height:16px;background:#c0c0c0"></div>
<div class="t" style="left:840.2px;width:40px;text-align:center;top:207px;font-size:12px;color:#262626">S</div>
<div class="a" style="left:936px;top:205px;width:1px;height:16px;background:#c0c0c0"></div>
<div class="t" style="left:892.7px;width:40px;text-align:center;top:207px;font-size:12px;color:#262626">T</div>
<div class="a" style="left:984px;top:205px;width:1px;height:16px;background:#c0c0c0"></div>
<div class="t" style="left:940.7px;width:40px;text-align:center;top:207px;font-size:12px;color:#262626">U</div>
<div class="a" style="left:1038px;top:205px;width:1px;height:16px;background:#c0c0c0"></div>
<div class="t" style="left:991.7px;width:40px;text-align:center;top:207px;font-size:12px;color:#262626">V</div>
<div class="a" style="left:1108px;top:205px;width:1px;height:16px;background:#c0c0c0"></div>
<div class="t" style="left:1053.7px;width:40px;text-align:center;top:207px;font-size:12px;color:#262626">W</div>
<div class="a" style="left:1250px;top:205px;width:1px;height:16px;background:#c0c0c0"></div>
<div class="t" style="left:1159.7px;width:40px;text-align:center;top:207px;font-size:12px;color:#262626">X</div>
<div class="t" style="left:1304.2px;width:40px;text-align:center;top:207px;font-size:12px;color:#262626">Y</div>
<div class="a" style="left:301px;top:205px;width:1px;height:16px;background:#a0a0a0"></div>
<div class="a" style="left:305px;top:205px;width:1px;height:16px;background:#a0a0a0"></div>
<div class="a" style="left:0;top:222px;width:25px;height:456px;background:#e6e6e6"></div>
<div class="a" style="left:0;top:326px;width:25px;height:1px;background:#c8c8c8"></div>
<div class="t" style="left:0;width:24px;text-align:center;top:312px;font-size:12px;color:#262626">1</div>
<div class="a" style="left:0;top:345px;width:25px;height:1px;background:#c8c8c8"></div>
<div class="t" style="left:0;width:24px;text-align:center;top:331px;font-size:12px;color:#262626">2</div>
<div class="a" style="left:0;top:364px;width:25px;height:1px;background:#c8c8c8"></div>
<div class="t" style="left:0;width:24px;text-align:center;top:350px;font-size:12px;color:#262626">3</div>
<div class="a" style="left:0;top:383px;width:25px;height:1px;background:#c8c8c8"></div>
<div class="t" style="left:0;width:24px;text-align:center;top:369px;font-size:12px;color:#262626">4</div>
<div class="a" style="left:0;top:429px;width:25px;height:1px;background:#c8c8c8"></div>
<div class="t" style="left:0;width:24px;text-align:center;top:415px;font-size:12px;color:#262626">5</div>
<div class="a" style="left:0;top:448px;width:25px;height:1px;background:#c8c8c8"></div>
<div class="t" style="left:0;width:24px;text-align:center;top:434px;font-size:12px;color:#262626">6</div>
<div class="a" style="left:0;top:496px;width:25px;height:1px;background:#c8c8c8"></div>
<div class="t" style="left:0;width:24px;text-align:center;top:482px;font-size:12px;color:#262626">7</div>
<div class="a" style="left:0;top:544px;width:25px;height:1px;background:#c8c8c8"></div>
<div class="t" style="left:0;width:24px;text-align:center;top:530px;font-size:12px;color:#262626">8</div>
<div class="a" style="left:0;top:592px;width:25px;height:1px;background:#c8c8c8"></div>
<div class="t" style="left:0;width:24px;text-align:center;top:578px;font-size:12px;color:#262626">9</div>
<div class="a" style="left:0;top:640px;width:25px;height:1px;background:#c8c8c8"></div>
<div class="t" style="left:0;width:24px;text-align:center;top:626px;font-size:12px;color:#262626">10</div>
<div class="t" style="left:0;width:24px;text-align:center;top:674px;font-size:12px;color:#262626">11</div>
<div class="a" style="left:26px;top:222px;width:1312px;height:456px;background:#fff;overflow:hidden" id="sheet">
<div class="vl" style="left:147px;top:0px;height:162px;background:#d9d9d9"></div>
<div class="hl" style="left:0px;top:142px;width:552px;background:#d9d9d9"></div>
<div class="vl" style="left:277px;top:142px;height:20px;background:#d9d9d9"></div>
<div class="vl" style="left:346px;top:142px;height:20px;background:#d9d9d9"></div>
<div class="vl" style="left:473px;top:142px;height:20px;background:#d9d9d9"></div>
<div class="hl" style="left:551px;top:142px;width:762px;background:#000"></div>
<div class="hl" style="left:0px;top:161px;width:1313px;background:#000"></div>
<div class="vl" style="left:551px;top:0px;height:457px;background:#000"></div>
<div class="vl" style="left:633px;top:0px;height:457px;background:#000"></div>
<div class="vl" style="left:708px;top:0px;height:457px;background:#000"></div>
<div class="vl" style="left:760px;top:0px;height:162px;background:#000"></div>
<div class="vl" style="left:760px;top:207px;height:250px;background:#000"></div>
<div class="vl" style="left:805px;top:0px;height:162px;background:#000"></div>
<div class="vl" style="left:805px;top:207px;height:250px;background:#000"></div>
<div class="vl" style="left:862px;top:0px;height:457px;background:#000"></div>
<div class="vl" style="left:910px;top:0px;height:162px;background:#000"></div>
<div class="vl" style="left:910px;top:207px;height:250px;background:#000"></div>
<div class="vl" style="left:958px;top:0px;height:162px;background:#000"></div>
<div class="vl" style="left:958px;top:207px;height:250px;background:#000"></div>
<div class="vl" style="left:1012px;top:0px;height:457px;background:#000"></div>
<div class="vl" style="left:1082px;top:0px;height:457px;background:#000"></div>
<div class="vl" style="left:1224px;top:0px;height:457px;background:#000"></div>
<div class="vl" style="left:1368px;top:0px;height:457px;background:#000"></div>
<div class="vl" style="left:147px;top:161px;height:296px;background:#000"></div>
<div class="vl" style="left:277px;top:161px;height:296px;background:#000"></div>
<div class="vl" style="left:346px;top:161px;height:296px;background:#000"></div>
<div class="vl" style="left:412px;top:161px;height:296px;background:#000"></div>
<div class="vl" style="left:473px;top:161px;height:296px;background:#000"></div>
<div class="hl" style="left:473px;top:207px;width:79px;background:#000"></div>
<div class="hl" style="left:708px;top:207px;width:305px;background:#000"></div>
<div class="vl" style="left:760px;top:207px;height:20px;background:#000"></div>
<div class="vl" style="left:805px;top:207px;height:20px;background:#000"></div>
<div class="vl" style="left:910px;top:207px;height:20px;background:#000"></div>
<div class="vl" style="left:958px;top:207px;height:20px;background:#000"></div>
<div class="hl" style="left:0px;top:274px;width:1313px;background:#000"></div>
<div class="hl" style="left:0px;top:322px;width:1313px;background:#000"></div>
<div class="hl" style="left:0px;top:370px;width:1313px;background:#000"></div>
<div class="hl" style="left:0px;top:418px;width:1313px;background:#000"></div>
<div class="cell ctr tt" style="left:151px;top:0px;width:397px;height:142px;justify-content:center;padding-bottom:0px;justify-content:flex-start;padding-top:55px"><div style="line-height:16px">REGISTRO DE FACTURAS DE COMPRA Y RETENCIONES A</div><div style="line-height:16px">PROVEEDORES DE MARZO 2024</div></div>
<div class="cell ctr h1" style="left:552px;top:0px;width:81px;height:142px;justify-content:center;margin-top:-1px"><div style="line-height:16px">Botellas</div><div style="line-height:16px">plásticas 1%</div></div>
<div class="cell ctr h1" style="left:634px;top:0px;width:74px;height:142px;justify-content:center;margin-top:-1px"><div style="line-height:16px">Actividades</div><div style="line-height:16px">de</div><div style="line-height:16px">construcció</div><div style="line-height:16px">n de obra</div><div style="line-height:16px">materias,</div><div style="line-height:16px">inmueble</div><div style="line-height:16px">urbanizació</div><div style="line-height:16px">n 1,75%</div></div>
<div class="cell ctr h1" style="left:709px;top:0px;width:51px;height:142px;justify-content:center;margin-top:-1px"><div style="line-height:16px">Cuando</div><div style="line-height:16px">no hay</div><div style="line-height:16px">retenció</div><div style="line-height:16px">n</div></div>
<div class="cell ctr h1" style="left:761px;top:0px;width:44px;height:142px;justify-content:center;margin-top:-1px"><div style="line-height:16px">100 %</div><div style="line-height:16px">y 1%.-</div><div style="line-height:16px">Regim</div><div style="line-height:16px">en</div><div style="line-height:16px">micro</div><div style="line-height:16px">mpres</div><div style="line-height:16px">a</div></div>
<div class="cell ctr h1" style="left:806px;top:0px;width:56px;height:142px;justify-content:center;margin-top:-1px"><div style="line-height:16px">Producto</div><div style="line-height:16px">s</div><div style="line-height:16px">agricoila</div><div style="line-height:16px">s o</div><div style="line-height:16px">Pecua</div><div style="line-height:16px">s 1%</div></div>
<div class="cell ctr h1" style="left:863px;top:0px;width:47px;height:142px;justify-content:center;margin-top:-1px"><div style="line-height:16px">Transfe</div><div style="line-height:16px">rencia</div><div style="line-height:16px">de</div><div style="line-height:16px">bienes</div><div style="line-height:16px">mueb</div><div style="line-height:16px">s 1,75%</div></div>
<div class="cell ctr h1" style="left:911px;top:0px;width:47px;height:142px;justify-content:center;margin-top:-1px"><div style="line-height:16px">para</div><div style="line-height:16px">las</div><div style="line-height:16px">retenci</div><div style="line-height:16px">ones</div><div style="line-height:16px">del</div><div style="line-height:16px">2,75%</div></div>
<div class="cell ctr h1" style="left:959px;top:0px;width:53px;height:142px;justify-content:center;margin-top:-1px"><div style="line-height:16px">Servicio</div><div style="line-height:16px">de</div><div style="line-height:16px">transpor</div><div style="line-height:16px">te 1%</div></div>
<div class="cell ctr h1" style="left:1013px;top:0px;width:69px;height:142px;justify-content:center;margin-top:-1px"><div style="line-height:16px">Regimen</div><div style="line-height:16px">Microempre</div><div style="line-height:16px">sarial:</div><div style="line-height:16px">100% y 1,75</div><div style="line-height:16px">%</div></div>
<div class="cell ctr h1" style="left:1083px;top:0px;width:141px;height:142px;justify-content:center;margin-top:-1px"><div style="line-height:16px">Honorarios</div><div style="line-height:16px">profesionales y demás</div><div style="line-height:16px">pagos por servicios</div><div style="line-height:16px">relacionados con el</div><div style="line-height:16px">título profesional 100%</div><div style="line-height:16px">10%</div></div>
<div class="cell ctr h1" style="left:1226.4px;top:-1px;width:144px;height:142px"><div style="line-height:16px">Seguros y reaseguros -</div><div style="line-height:16px">primas y cesiones)</div></div>
<div class="dd" style="left:131px;top:86px"></div>
<div class="dd" style="left:535px;top:86px"></div>
<div class="dd" style="left:615px;top:86px"></div>
<div class="dd" style="left:691px;top:86px"></div>
<div class="dd" style="left:743px;top:86px"></div>
<div class="dd" style="left:788px;top:86px"></div>
<div class="dd" style="left:845px;top:86px"></div>
<div class="dd" style="left:893px;top:86px"></div>
<div class="dd" style="left:941px;top:86px"></div>
<div class="dd" style="left:995px;top:86px"></div>
<div class="dd" style="left:1065px;top:86px"></div>
<div class="dd" style="left:1207px;top:86px"></div>
<div class="t" style="right:1239.3px;top:82px;font-size:31px;line-height:40px;font-weight:bold;color:#1a5a2b;letter-spacing:-1.6px;-webkit-text-stroke:0.8px #1a5a2b">VALLE HERMOSO</div>
<div class="a" style="left:78px;top:62px;width:31px;height:4px;background:#f9d132"></div>
<div class="a" style="left:78px;top:81px;width:44px;height:4px;background:#1a5a2b"></div>
<div class="a" style="left:78px;top:98px;width:70px;height:4px;background:#1b7da6"></div>
<div class="cell ctr h4" style="left:350px;top:143px;width:120px;height:18px;justify-content:center;"><div style="line-height:16px">TOTAL 332</div></div>
<div class="cell ctr h4" style="left:477px;top:143px;width:71px;height:18px;justify-content:center;"><div style="line-height:16px">#¡REF!</div></div>
<div class="cell ctr h4" style="left:552px;top:143px;width:81px;height:18px;justify-content:center;"><div style="line-height:16px">343C</div></div>
<div class="cell ctr h4" style="left:634px;top:143px;width:74px;height:18px;justify-content:center;"><div style="line-height:16px">343B</div></div>
<div class="cell ctr h4" style="left:709px;top:143px;width:51px;height:18px;justify-content:center;"><div style="line-height:16px">332</div></div>
<div class="cell ctr h4" style="left:761px;top:143px;width:44px;height:18px;justify-content:center;"><div style="line-height:16px">343</div></div>
<div class="cell ctr h4" style="left:806px;top:143px;width:56px;height:18px;justify-content:center;"><div style="line-height:16px">312A</div></div>
<div class="cell ctr h4" style="left:863px;top:143px;width:47px;height:18px;justify-content:center;"><div style="line-height:16px">312</div></div>
<div class="cell ctr h4" style="left:911px;top:143px;width:47px;height:18px;justify-content:center;"><div style="line-height:16px">3440</div></div>
<div class="cell ctr h4" style="left:959px;top:143px;width:53px;height:18px;justify-content:center;"><div style="line-height:16px">310</div></div>
<div class="cell ctr h4" style="left:1013px;top:143px;width:69px;height:18px;justify-content:center;"><div style="line-height:16px">351</div></div>
<div class="cell ctr h4" style="left:1083px;top:143px;width:141px;height:18px;justify-content:center;"><div style="line-height:16px">303</div></div>
<div class="cell ctr h4" style="left:1225px;top:143px;width:144px;height:18px">322</div>
<div class="cell ctr h5" style="left:3px;top:162px;width:141px;height:64px;justify-content:center;"><div style="line-height:16px">AUTORIZACIÓN</div></div>
<div class="cell ctr h5" style="left:151px;top:162px;width:123px;height:64px;justify-content:center;"><div style="line-height:16px">PROVEEDOR</div></div>
<div class="cell ctr h5" style="left:278px;top:162px;width:68px;height:64px;justify-content:center;"><div style="line-height:16px">BASE 12%</div></div>
<div class="cell ctr h5" style="left:347px;top:162px;width:65px;height:64px;justify-content:center;"><div style="line-height:16px">BASE 0%</div></div>
<div class="cell ctr h5" style="left:416px;top:162px;width:54px;height:64px;justify-content:center;"><div style="line-height:16px">IVA</div></div>
<div class="cell ctr h5" style="left:477px;top:162px;width:71px;height:45px;justify-content:center;"><div style="line-height:16px">SUBTO-TAL</div></div>
<div class="cell ctr h5" style="left:477px;top:208px;width:71px;height:18px;justify-content:center;"><div style="line-height:16px">332</div></div>
<div class="cell ctr h5" style="left:555px;top:162px;width:75px;height:64px;justify-content:center;"><div style="line-height:16px">TOTAL</div></div>
<div class="cell ctr h5" style="left:634px;top:162px;width:74px;height:64px;justify-content:center;"><div style="line-height:15px">N°</div><div style="line-height:15px">RETENCION</div></div>
<div class="cell ctr h5" style="left:712px;top:162px;width:147px;height:45px;justify-content:center;"><div style="line-height:16px">RETENCION IVA</div></div>
<div class="cell ctr h5" style="left:866px;top:162px;width:143px;height:45px;justify-content:center;"><div style="line-height:16px">RETENCIÓN A LA RENTA</div></div>
<div class="cell rgt h5" style="left:711px;top:208px;width:47px;height:18px;justify-content:center;"><div style="line-height:16px">10%</div></div>
<div class="cell rgt h5" style="left:763px;top:208px;width:40px;height:18px;justify-content:center;"><div style="line-height:16px">70%</div></div>
<div class="cell rgt h5" style="left:808px;top:208px;width:52px;height:18px;justify-content:center;"><div style="line-height:16px">100%</div></div>
<div class="cell rgt h5" style="left:865px;top:208px;width:43px;height:18px;justify-content:center;"><div style="line-height:16px">COD</div></div>
<div class="cell ctr h5" style="left:913px;top:208px;width:43px;height:18px;justify-content:center;"><div style="line-height:16px">%</div></div>
<div class="cell rgt h5" style="left:961px;top:208px;width:49px;height:18px;justify-content:center;"><div style="line-height:16px">VAL</div></div>
<div class="cell ctr h5" style="left:1016px;top:162px;width:63px;height:64px;justify-content:center;"><div style="line-height:15px">VALOR</div><div style="line-height:15px">PAGO</div></div>
<div class="cell ctr h5" style="left:1086px;top:162px;width:135px;height:64px;justify-content:center;"><div style="line-height:15px">RETENCION</div><div style="line-height:15px">AUTORIZACION</div><div style="line-height:15px">COMPROBANTE</div></div>
<div class="cell ctr h5" style="left:1225px;top:162px;width:144px;height:64px">DESCRIPCION</div>
<div class="cell lft dd1" style="left:2px;top:227px;width:143px;height:47px;justify-content:flex-start;"><div style="line-height:16px">01032024011716188089</div><div style="line-height:16px">00120010030000000963</div><div style="line-height:16px">857431614</div></div>
<div class="cell lft dn" style="left:150px;top:227px;width:125px;height:47px;justify-content:flex-start;"><div style="line-height:16px">ACOSTA CARRASCAL</div><div style="line-height:16px">LILIAN VALERIA</div></div>
<div class="cell ctr dv" style="left:278px;top:227px;width:68px;height:47px;justify-content:center;"><div style="line-height:16px">12393.34</div></div>
<div class="cell ctr dv" style="left:347px;top:227px;width:65px;height:47px;justify-content:center;"><div style="line-height:16px">0.00</div></div>
<div class="cell ctr dv" style="left:413px;top:227px;width:60px;height:47px;justify-content:center;"><div style="line-height:16px">1487.20</div></div>
<div class="cell ctr dv" style="left:474px;top:227px;width:77px;height:47px;justify-content:center;"><div style="line-height:16px">12393.34</div></div>
<div class="cell ctr dv" style="left:552px;top:227px;width:81px;height:47px;justify-content:center;"><div style="line-height:16px">13880.54</div></div>
<div class="cell ctr dv" style="left:634px;top:227px;width:74px;height:47px;justify-content:center;"><div style="line-height:16px">000001399</div></div>
<div class="cell ctr dv" style="left:806px;top:227px;width:56px;height:47px;justify-content:center;"><div style="line-height:16px">1487.20</div></div>
<div class="cell ctr dv" style="left:863px;top:227px;width:47px;height:47px;justify-content:center;"><div style="line-height:16px">351</div></div>
<div class="cell ctr dv" style="left:911px;top:227px;width:47px;height:47px;justify-content:center;"><div style="line-height:16px">1.75%</div></div>
<div class="cell ctr dv" style="left:959px;top:227px;width:53px;height:47px;justify-content:center;"><div style="line-height:16px">216.88</div></div>
<div class="cell ctr dv" style="left:1013px;top:227px;width:69px;height:47px;justify-content:center;"><div style="line-height:16px">12176.46</div></div>
<div class="cell lft dd1" style="left:1084px;top:227px;width:139px;height:47px;justify-content:flex-start;"><div style="line-height:16px">0103202407176812060</div><div style="line-height:16px">0001200100100000139</div><div style="line-height:16px">91234567811</div></div>
<div class="cell lft dn" style="letter-spacing:0.1px;left:1227px;top:227px;width:140px;height:47px"><div style="line-height:16px">SISTEMA DE BOMBEO</div><div style="line-height:16px">AGUA CRISTÓBAL</div></div>
<div class="tri" style="left:0px;top:227px"></div>
<div class="tri" style="left:634px;top:227px"></div>
<div class="tri" style="left:1083px;top:227px"></div>
<div class="cell lft dd1" style="left:2px;top:275px;width:143px;height:47px;justify-content:flex-start;"><div style="line-height:16px">03032024010401487954</div><div style="line-height:16px">00120020010000012991</div><div style="line-height:16px">198824512</div></div>
<div class="cell lft dn" style="left:150px;top:275px;width:125px;height:47px;justify-content:flex-start;"><div style="line-height:16px">CUASAPAZ TIRIRA</div><div style="line-height:16px">EDISON GUILLERMO</div></div>
<div class="cell ctr dv" style="left:278px;top:275px;width:68px;height:47px;justify-content:center;"><div style="line-height:16px">600.00</div></div>
<div class="cell ctr dv" style="left:347px;top:275px;width:65px;height:47px;justify-content:center;"><div style="line-height:16px">0.00</div></div>
<div class="cell ctr dv" style="left:413px;top:275px;width:60px;height:47px;justify-content:center;"><div style="line-height:16px">72.00</div></div>
<div class="cell ctr dv" style="left:474px;top:275px;width:77px;height:47px;justify-content:center;"><div style="line-height:16px">600.00</div></div>
<div class="cell ctr dv" style="left:552px;top:275px;width:81px;height:47px;justify-content:center;"><div style="line-height:16px">672.00</div></div>
<div class="cell ctr dv" style="left:634px;top:275px;width:74px;height:47px;justify-content:center;"><div style="line-height:16px">000001398</div></div>
<div class="cell ctr dv" style="left:806px;top:275px;width:56px;height:47px;justify-content:center;"><div style="line-height:16px">72.00</div></div>
<div class="cell ctr dv" style="left:863px;top:275px;width:47px;height:47px;justify-content:center;"><div style="line-height:16px">343</div></div>
<div class="cell ctr dv" style="left:911px;top:275px;width:47px;height:47px;justify-content:center;"><div style="line-height:16px">1.00%</div></div>
<div class="cell ctr dv" style="left:959px;top:275px;width:53px;height:47px;justify-content:center;"><div style="line-height:16px">6.00</div></div>
<div class="cell ctr dv" style="left:1013px;top:275px;width:69px;height:47px;justify-content:center;"><div style="line-height:16px">594.00</div></div>
<div class="cell lft dd1" style="left:1084px;top:275px;width:139px;height:47px;justify-content:flex-start;"><div style="line-height:16px">0303202407176812060</div><div style="line-height:16px">0001200100100000139</div><div style="line-height:16px">81234567815</div></div>
<div class="cell lft dn" style="letter-spacing:0.1px;left:1227px;top:275px;width:140px;height:47px"><div style="line-height:16px">LICENCIA SISTEMA</div><div style="line-height:16px">CONTABLE</div></div>
<div class="tri" style="left:0px;top:275px"></div>
<div class="tri" style="left:634px;top:275px"></div>
<div class="tri" style="left:1083px;top:275px"></div>
<div class="cell lft dd1" style="left:2px;top:323px;width:143px;height:47px;justify-content:flex-start;"><div style="line-height:16px">05032024011714609094</div><div style="line-height:16px">00120011000000000074</div><div style="line-height:16px">098028814</div></div>
<div class="cell lft dn" style="left:150px;top:323px;width:125px;height:47px;justify-content:flex-start;"><div style="line-height:16px">LOZADA GARCES</div><div style="line-height:16px">ROSALBA MARIBEL</div></div>
<div class="cell ctr dv" style="left:278px;top:323px;width:68px;height:47px;justify-content:center;"><div style="line-height:16px">280.00</div></div>
<div class="cell ctr dv" style="left:347px;top:323px;width:65px;height:47px;justify-content:center;"><div style="line-height:16px">0.00</div></div>
<div class="cell ctr dv" style="left:413px;top:323px;width:60px;height:47px;justify-content:center;"><div style="line-height:16px">33.60</div></div>
<div class="cell ctr dv" style="left:474px;top:323px;width:77px;height:47px;justify-content:center;"><div style="line-height:16px">280.00</div></div>
<div class="cell ctr dv" style="left:552px;top:323px;width:81px;height:47px;justify-content:center;"><div style="line-height:16px">313.60</div></div>
<div class="cell ctr dv" style="left:634px;top:323px;width:74px;height:47px;justify-content:center;"><div style="line-height:16px">000001401</div></div>
<div class="cell ctr dv" style="left:806px;top:323px;width:56px;height:47px;justify-content:center;"><div style="line-height:16px">33.60</div></div>
<div class="cell ctr dv" style="left:863px;top:323px;width:47px;height:47px;justify-content:center;"><div style="line-height:16px">3440</div></div>
<div class="cell ctr dv" style="left:911px;top:323px;width:47px;height:47px;justify-content:center;"><div style="line-height:16px">2.75%</div></div>
<div class="cell ctr dv" style="left:959px;top:323px;width:53px;height:47px;justify-content:center;"><div style="line-height:16px">7.70</div></div>
<div class="cell ctr dv" style="left:1013px;top:323px;width:69px;height:47px;justify-content:center;"><div style="line-height:16px">272.30</div></div>
<div class="cell lft dd1" style="left:1084px;top:323px;width:139px;height:47px;justify-content:flex-start;"><div style="line-height:16px">0503202407176812060</div><div style="line-height:16px">0001200100100000140</div><div style="line-height:16px">11234567819</div></div>
<div class="cell lft dn" style="letter-spacing:0.1px;left:1227px;top:323px;width:140px;height:47px"><div style="line-height:16px">REFRIGERIOS Y LUNCH</div><div style="line-height:16px">EVENTO DIA</div><div style="line-height:16px">INTERNACIONAL</div></div>
<div class="tri" style="left:0px;top:323px"></div>
<div class="tri" style="left:634px;top:323px"></div>
<div class="tri" style="left:1083px;top:323px"></div>
<div class="cell lft dd1" style="left:2px;top:371px;width:143px;height:47px;justify-content:flex-start;"><div style="line-height:16px">05032024010504104688</div><div style="line-height:16px">00120011000000000091</div><div style="line-height:16px">234567818</div></div>
<div class="cell lft dn" style="left:150px;top:371px;width:125px;height:47px;justify-content:flex-start;"><div style="line-height:16px">PANCHI LOGROÑO</div><div style="line-height:16px">JOSSELIN YADIRA</div></div>
<div class="cell ctr dv" style="left:278px;top:371px;width:68px;height:47px;justify-content:center;"><div style="line-height:16px">500.00</div></div>
<div class="cell ctr dv" style="left:347px;top:371px;width:65px;height:47px;justify-content:center;"><div style="line-height:16px">0.00</div></div>
<div class="cell ctr dv" style="left:413px;top:371px;width:60px;height:47px;justify-content:center;"><div style="line-height:16px">60.00</div></div>
<div class="cell ctr dv" style="left:474px;top:371px;width:77px;height:47px;justify-content:center;"><div style="line-height:16px">500.00</div></div>
<div class="cell ctr dv" style="left:552px;top:371px;width:81px;height:47px;justify-content:center;"><div style="line-height:16px">560.00</div></div>
<div class="cell ctr dv" style="left:634px;top:371px;width:74px;height:47px;justify-content:center;"><div style="line-height:16px">000001402</div></div>
<div class="cell ctr dv" style="left:806px;top:371px;width:56px;height:47px;justify-content:center;"><div style="line-height:16px">60.00</div></div>
<div class="cell ctr dv" style="left:863px;top:371px;width:47px;height:47px;justify-content:center;"><div style="line-height:16px">3440</div></div>
<div class="cell ctr dv" style="left:911px;top:371px;width:47px;height:47px;justify-content:center;"><div style="line-height:16px">2.75%</div></div>
<div class="cell ctr dv" style="left:959px;top:371px;width:53px;height:47px;justify-content:center;"><div style="line-height:16px">13.75</div></div>
<div class="cell ctr dv" style="left:1013px;top:371px;width:69px;height:47px;justify-content:center;"><div style="line-height:16px">486.25</div></div>
<div class="cell lft dd1" style="left:1084px;top:371px;width:139px;height:47px;justify-content:flex-start;"><div style="line-height:16px">0503202407176812060</div><div style="line-height:16px">0001200100100000140</div><div style="line-height:16px">21234567814</div></div>
<div class="cell lft dn" style="letter-spacing:0.1px;left:1227px;top:371px;width:140px;height:47px"><div style="line-height:16px">LOGISTICA EVENTO</div><div style="line-height:16px">LA MUJER ADULTA</div></div>
<div class="tri" style="left:0px;top:371px"></div>
<div class="tri" style="left:634px;top:371px"></div>
<div class="tri" style="left:1083px;top:371px"></div>
<div class="cell lft dd1" style="left:2px;top:419px;width:143px;height:47px;justify-content:flex-start;"><div style="line-height:16px">05032024010905075859</div><div style="line-height:16px">00120010040000940410</div><div style="line-height:16px">004098821</div></div>
<div class="cell lft dn" style="left:150px;top:419px;width:125px;height:47px;justify-content:flex-start;"><div style="line-height:16px">QUIMI GUEVARA</div><div style="line-height:16px">ARMANDO JAVIER</div></div>
<div class="cell ctr dv" style="left:278px;top:419px;width:68px;height:47px;justify-content:center;"><div style="line-height:16px">8.04</div></div>
<div class="cell ctr dv" style="left:347px;top:419px;width:65px;height:47px;justify-content:center;"><div style="line-height:16px">0.00</div></div>
<div class="cell ctr dv" style="left:413px;top:419px;width:60px;height:47px;justify-content:center;"><div style="line-height:16px">0.96</div></div>
<div class="cell ctr dv" style="left:474px;top:419px;width:77px;height:47px;justify-content:center;"><div style="line-height:16px">8.04</div></div>
<div class="cell ctr dv" style="left:552px;top:419px;width:81px;height:47px;justify-content:center;"><div style="line-height:16px">9.00</div></div>
<div class="cell ctr dv" style="left:634px;top:419px;width:74px;height:47px;justify-content:center;"><div style="line-height:16px">000001403</div></div>
<div class="cell ctr dv" style="left:806px;top:419px;width:56px;height:47px;justify-content:center;"><div style="line-height:16px">0.96</div></div>
<div class="cell ctr dv" style="left:863px;top:419px;width:47px;height:47px;justify-content:center;"><div style="line-height:16px">351</div></div>
<div class="cell ctr dv" style="left:911px;top:419px;width:47px;height:47px;justify-content:center;"><div style="line-height:16px">1.75%</div></div>
<div class="cell ctr dv" style="left:959px;top:419px;width:53px;height:47px;justify-content:center;"><div style="line-height:16px">0.14</div></div>
<div class="cell ctr dv" style="left:1013px;top:419px;width:69px;height:47px;justify-content:center;"><div style="line-height:16px">7.90</div></div>
<div class="cell lft dd1" style="left:1084px;top:419px;width:139px;height:47px;justify-content:flex-start;"><div style="line-height:16px">0503202407176812060</div><div style="line-height:16px">0001200100100000140</div><div style="line-height:16px">31234567811</div></div>
<div class="cell lft dn" style="letter-spacing:0.1px;left:1227px;top:419px;width:140px;height:47px"><div style="line-height:16px">FUNDAS PLÁSTICAS</div><div style="line-height:16px">ADULTO MAYOR</div></div>
<div class="tri" style="left:0px;top:419px"></div>
<div class="tri" style="left:634px;top:419px"></div>
<div class="tri" style="left:1083px;top:419px"></div>
<div class="tri" style="left:474px;top:143px"></div>
<div class="tri" style="left:911px;top:275px"></div>
<div class="hl" style="left:0px;top:226px;width:1313px;background:#9c9c9c"></div>
</div>
<div class="a" style="left:5px;top:167px;width:102px;height:26px;background:#fff;border:1px solid #c6c6c6"></div><div class="t" style="left:12px;top:172.5px;line-height:16px;font-size:12px;color:#262626;font-weight:normal;letter-spacing:0px;">M56</div><svg class="a" style="left:93px;top:177px" width="8" height="5" viewBox="0 0 8 5"><path d="M0 0 H7 L3.5 4 Z" fill="#6d6d6d"/></svg><div class="a" style="left:121px;top:175px;width:2px;height:2px;background:#a0a0a0;"></div><div class="a" style="left:121px;top:179px;width:2px;height:2px;background:#a0a0a0;"></div><div class="a" style="left:121px;top:183px;width:2px;height:2px;background:#a0a0a0;"></div><div class="a" style="left:137px;top:167px;width:110px;height:26px;background:#fff;border:1px solid #c6c6c6"></div><svg class="a" style="left:151px;top:175px" width="11" height="11" viewBox="0 0 11 11"><path d="M0.5 0.5 L10.5 10.5 M10.5 0.5 L0.5 10.5" stroke="#c6c6c6" stroke-width="1.3"/></svg><svg class="a" style="left:185px;top:175px" width="14" height="11" viewBox="0 0 14 11"><path d="M1 5.5 L5 9.5 L13 1" fill="none" stroke="#c6c6c6" stroke-width="1.8"/></svg><div class="t" style="left:28px;width:400px;text-align:center;top:171.0px;line-height:18px;font-size:13px;color:#666;font-weight:bold;letter-spacing:0px;font-family:Liberation Serif;"><i>f</i><span style="font-size:10px;font-style:italic">x</span></div><div class="a" style="left:250px;top:167px;width:1105px;height:26px;background:#fff;border:1px solid #c6c6c6"></div><svg class="a" style="left:1342px;top:177px" width="9" height="6" viewBox="0 0 9 6"><path d="M0.8 0.8 L4.5 4.5 L8.2 0.8" fill="none" stroke="#666" stroke-width="1.7"/></svg><div class="a" style="left:0px;top:678px;width:1360px;height:28px;background:#e6e6e6;"></div><div class="a" style="left:0px;top:678px;width:1339px;height:1px;background:#b6b6b6;"></div><svg class="a" style="left:27px;top:688px" width="5" height="8" viewBox="0 0 5 8"><path d="M4.5 0 V8 L0 4 Z" fill="#b8b8b8"/></svg><svg class="a" style="left:56px;top:688px" width="5" height="8" viewBox="0 0 5 8"><path d="M0 0 V8 L4.5 4 Z" fill="#b8b8b8"/></svg><div class="a" style="left:100px;top:681px;width:1px;height:21px;background:#b0b0b0;"></div><div class="a" style="left:103px;top:681px;width:60px;height:22px;background:#ff0000;"></div><div class="t" style="left:-67.5px;width:400px;text-align:center;top:684.0px;line-height:16px;font-size:11.5px;color:#fff;font-weight:normal;letter-spacing:0px;">EXTRA</div><div class="a" style="left:165px;top:681px;width:1px;height:21px;background:#b0b0b0;"></div><div class="t" style="left:13.5px;width:400px;text-align:center;top:684.0px;line-height:16px;font-size:11.5px;color:#444;font-weight:normal;letter-spacing:0.35px;">ENERO 2024</div><div class="a" style="left:267px;top:681px;width:1px;height:21px;background:#b0b0b0;"></div><div class="t" style="left:122.5px;width:400px;text-align:center;top:684.0px;line-height:16px;font-size:11.5px;color:#444;font-weight:normal;letter-spacing:0.0px;">FEBRERO 2024</div><div class="a" style="left:378px;top:678px;width:103px;height:25px;background:#fff;border-left:1px solid #b0b0b0;border-right:1px solid #b0b0b0"></div><div class="a" style="left:378px;top:701px;width:103px;height:2px;background:#217346;"></div><div class="t" style="left:230px;width:400px;text-align:center;top:683.5px;line-height:16px;font-size:12px;color:#217346;font-weight:bold;letter-spacing:0.45px;">MARZO 2024</div><svg class="a" style="left:514px;top:685px" width="17" height="16" viewBox="0 0 17 16"><circle cx="8" cy="8" r="7.2" fill="none" stroke="#777" stroke-width="1.3"/><path d="M8 4 V12 M4 8 H12" stroke="#777" stroke-width="1.5"/></svg><div class="a" style="left:730px;top:686px;width:2px;height:2px;background:#b8b8b8;"></div><div class="a" style="left:730px;top:690px;width:2px;height:2px;background:#b8b8b8;"></div><div class="a" style="left:730px;top:694px;width:2px;height:2px;background:#b8b8b8;"></div><div class="a" style="left:746px;top:685px;width:590px;height:15px;background:#f0f0f0;"></div><div class="a" style="left:746px;top:685px;width:15px;height:15px;background:#fff;border:1px solid #a0a0a0"></div><svg class="a" style="left:751px;top:689px" width="5" height="8" viewBox="0 0 5 8"><path d="M4.5 0 V7 L0 3.5 Z" fill="#222"/></svg><div class="a" style="left:912px;top:685px;width:387px;height:15px;background:#fff;border:1px solid #a0a0a0"></div><div class="a" style="left:1321px;top:685px;width:15px;height:15px;background:#fff;border:1px solid #a0a0a0"></div><svg class="a" style="left:1326px;top:689px" width="5" height="8" viewBox="0 0 5 8"><path d="M0 0 V7 L4.5 3.5 Z" fill="#222"/></svg><div class="a" style="left:1339px;top:203px;width:21px;height:475px;background:#e6e6e6;"></div><div class="a" style="left:1338px;top:221px;width:1px;height:457px;background:#ababab;"></div><div class="a" style="left:1342px;top:205px;width:15px;height:473px;background:#f0f0f0;"></div><div class="a" style="left:1342px;top:205px;width:15px;height:15px;background:#fff;border:1px solid #a0a0a0"></div><svg class="a" style="left:1345px;top:210px" width="9" height="5" viewBox="0 0 9 5"><path d="M0 4.5 H8 L4 0 Z" fill="#222"/></svg><div class="a" style="left:1342px;top:220px;width:15px;height:106px;background:#e8f1ec;border:1px solid #4a9a6a"></div><div class="a" style="left:1342px;top:663px;width:15px;height:15px;background:#fff;border:1px solid #a0a0a0"></div><svg class="a" style="left:1345px;top:668px" width="9" height="5" viewBox="0 0 9 5"><path d="M0 0 H8 L4 4.5 Z" fill="#222"/></svg><div class="a" style="left:0px;top:706px;width:1360px;height:22px;background:#f3f3f3;"></div><div class="a" style="left:0px;top:706px;width:1360px;height:1px;background:#d4d4d4;"></div><div class="t" style="left:-177.5px;width:400px;text-align:center;top:710.0px;line-height:16px;font-size:11.5px;color:#444;font-weight:normal;letter-spacing:0px;">Listo</div><svg class="a" style="left:53px;top:709px" width="18" height="17" viewBox="0 0 18 17"><path d="M5.6 2.2 A5.75 5.75 0 0 0 6.6 13.6" fill="none" stroke="#555" stroke-width="1.2" stroke-dasharray="2 1.2"/><path d="M7.4 1 V6.5" stroke="#555" stroke-width="1.1"/><path d="M5.3 6 L7.4 8.2 L9.5 6 Z" fill="#555"/><path d="M8 6.4 H12.5" stroke="#555" stroke-width="1.1"/><path d="M12 4.3 L14.3 6.4 L12 8.5 Z" fill="#555"/><path d="M8.6 8.8 L16.6 15.6 M16.3 8.9 L8.6 15.4" stroke="#444" stroke-width="1.8"/></svg><div class="t" style="left:73px;top:710.0px;line-height:14px;font-size:10.5px;color:#222;font-weight:bold;letter-spacing:0px;">Accesibilidad: es necesario investigar</div><div class="a" style="left:1066px;top:707px;width:40px;height:20px;background:#c6c6c6;"></div><svg class="a" style="left:1078px;top:709px" width="15" height="15" viewBox="0 0 15 15"><rect x="1.5" y="1.5" width="12" height="12" fill="none" stroke="#6a6a6a" stroke-width="1.2"/><path d="M5.5 1.5 V13.5 M9.5 1.5 V13.5 M1.5 5.5 H13.5 M1.5 9.5 H13.5" stroke="#6a6a6a" stroke-width="1.2"/></svg><svg class="a" style="left:1118px;top:710px" width="15" height="14" viewBox="0 0 15 14"><rect x="0.5" y="0.5" width="13" height="13" fill="none" stroke="#777"/><rect x="3.5" y="3.5" width="7" height="7" fill="none" stroke="#777"/><path d="M5 5.5 H9 M5 7.5 H9" stroke="#777"/></svg><svg class="a" style="left:1158px;top:709px" width="15" height="15" viewBox="0 0 15 15"><path d="M0.5 0.5 H13.5 V13.5 H0.5 Z M0.5 7.5 H9.5 V0.5 M5 0.5 V7.5" fill="none" stroke="#777"/></svg><div class="a" style="left:1192px;top:716px;width:8px;height:1px;background:#444;"></div><div class="a" style="left:1205px;top:716px;width:99px;height:1px;background:#555;"></div><div class="a" style="left:1250px;top:711px;width:5px;height:12px;background:#555;"></div><div class="a" style="left:1309px;top:716px;width:9px;height:1px;background:#444;"></div><div class="a" style="left:1313px;top:712px;width:1px;height:9px;background:#444;"></div><div class="t" style="left:1141.5px;width:400px;text-align:center;top:709.5px;line-height:15px;font-size:11px;color:#444;font-weight:normal;letter-spacing:0px;">95%</div><div class="a" style="left:0px;top:728px;width:1360px;height:40px;background:#101010;"></div><svg class="a" style="left:16px;top:741px" width="17" height="17" viewBox="0 0 17 17"><path d="M0 2.2 L7 1.2 V7.6 H0 Z M8 1 L17 0 V7.6 H8 Z M0 8.6 H7 V15 L0 14 Z M8 8.6 H17 V17 L8 15.8 Z" fill="#fff"/></svg><div class="a" style="left:48px;top:728px;width:345px;height:40px;background:#f0f0f0;"></div><svg class="a" style="left:59px;top:740px" width="18" height="17" viewBox="0 0 18 17"><circle cx="11.5" cy="6.5" r="5.3" fill="none" stroke="#333" stroke-width="1.4"/><path d="M7.5 10.5 L1 17" stroke="#333" stroke-width="1.5"/></svg><div class="t" style="left:88.5px;top:738.5px;line-height:20px;font-size:14.5px;color:#444;font-weight:normal;letter-spacing:-0.05px;">Escribe aquí para buscar</div><svg class="a" style="left:406px;top:736px" width="26" height="25" viewBox="0 0 26 25"><defs><linearGradient id="eg" x1="0.9" y1="0.1" x2="0.1" y2="0.9"><stop offset="0" stop-color="#74d86b"/><stop offset="0.3" stop-color="#3cbde0"/><stop offset="0.6" stop-color="#1d8ce0"/><stop offset="1" stop-color="#0f62b8"/></linearGradient></defs><circle cx="12.5" cy="12.5" r="12.2" fill="url(#eg)"/><path d="M9.5 12.5 Q12 9.5 17 10.5 Q22.5 12 24.6 15.5 Q23.5 19.5 19 19.5 Q13 19 9.5 12.5 Z" fill="#101010"/><path d="M9.5 12.5 Q13 19 19 19.5 Q21.5 19.5 23.5 18.5 Q21 23.5 14.5 24.5 Q8 24.5 6.5 18 Q6 14 9.5 12.5 Z" fill="#0e4d94"/><circle cx="13.8" cy="14.3" r="3.2" fill="#101010"/><path d="M11 14 Q12 10.8 15.5 11.4 Q13 12 12.8 14.5 Q13 17 16 17.8 Q12 18 11 14 Z" fill="#1e7fd6"/></svg><svg class="a" style="left:455px;top:735px" width="26" height="26" viewBox="0 0 26 26"><circle cx="13" cy="13" r="12.5" fill="#db4437"/><path d="M13 13 L2.2 6.75 A12.5 12.5 0 0 0 13 25.5 Z" fill="#0f9d58"/><path d="M13 13 L13 25.5 A12.5 12.5 0 0 0 23.8 6.75 Z" fill="#ffcd40"/><path d="M13 13 L2.2 6.75 A12.5 12.5 0 0 1 23.8 6.75 Z" fill="#db4437"/><circle cx="13" cy="13" r="5.8" fill="#fff"/><circle cx="13" cy="13" r="4.5" fill="#4285f4"/></svg><svg class="a" style="left:505px;top:737px" width="24" height="22" viewBox="0 0 24 22"><path d="M0.5 1.5 H8 L10 3.5 H22.5 V19 H0.5 Z" fill="#e8a920"/><rect x="0.5" y="5.5" width="22" height="13.5" fill="#ffd45e"/><rect x="5" y="11.8" width="13.5" height="8.2" fill="#2a8de0"/><rect x="8" y="14.5" width="7.5" height="5.5" fill="#ffd45e"/></svg><svg class="a" style="left:553px;top:735px" width="26" height="27" viewBox="0 0 26 27"><defs><radialGradient id="fg" cx="0.7" cy="0.2" r="1"><stop offset="0" stop-color="#ffe14d"/><stop offset="0.45" stop-color="#ff8a2a"/><stop offset="0.8" stop-color="#ff3a5c"/><stop offset="1" stop-color="#e31587"/></radialGradient></defs><path d="M3 9 Q4 5 6 4 Q6 7 8 8 Q10 5 14 5 Q16 2 17 0.5 Q18 3 20 5 Q25 9 25 15 Q25 23 17 26 Q8 27.5 3.5 21 Q1 16 3 9 Z" fill="url(#fg)"/><circle cx="13.5" cy="14.5" r="5.5" fill="#7b4be0"/><path d="M8 11 Q12 8 16 10 Q12 11 11 14 Z" fill="#ff9a2e"/></svg><svg class="a" style="left:602px;top:737px" width="26" height="22" viewBox="0 0 26 22"><rect x="7" y="0" width="18" height="21" rx="0.8" fill="#41a5ee"/><rect x="7" y="5.2" width="18" height="5.3" fill="#2b7cd3"/><rect x="7" y="10.5" width="18" height="5.3" fill="#185abd"/><rect x="7" y="15.8" width="18" height="5.2" fill="#103f91"/><rect x="1" y="5" width="12.6" height="12" rx="0.8" fill="#185abd"/><text x="2.2" y="14.8" font-family="Liberation Sans" font-weight="bold" font-size="10" fill="#fff">W</text></svg><div class="a" style="left:640px;top:728px;width:48px;height:40px;background:#333333;"></div><div class="a" style="left:640px;top:766px;width:48px;height:2px;background:#76b9ed;"></div><svg class="a" style="left:651px;top:737px" width="26" height="22" viewBox="0 0 26 22"><rect x="7" y="0" width="18" height="21" rx="0.8" fill="#21a366"/><rect x="16" y="0" width="9" height="5.3" fill="#33c481"/><rect x="7" y="5.2" width="18" height="5.3" fill="#21a366"/><rect x="7" y="10.5" width="18" height="5.3" fill="#107c41"/><rect x="7" y="15.8" width="18" height="5.2" fill="#185c37"/><rect x="1" y="5" width="12.6" height="12" rx="0.8" fill="#107c41"/><text x="3.5" y="14.8" font-family="Liberation Sans" font-weight="bold" font-size="10" fill="#fff">X</text></svg><svg class="a" style="left:700px;top:735px" width="26" height="26" viewBox="0 0 26 26"><circle cx="13" cy="13" r="12.5" fill="#db4437"/><path d="M13 13 L2.2 6.75 A12.5 12.5 0 0 0 13 25.5 Z" fill="#0f9d58"/><path d="M13 13 L13 25.5 A12.5 12.5 0 0 0 23.8 6.75 Z" fill="#ffcd40"/><path d="M13 13 L2.2 6.75 A12.5 12.5 0 0 1 23.8 6.75 Z" fill="#db4437"/><circle cx="13" cy="13" r="5.8" fill="#fff"/><circle cx="13" cy="13" r="4.5" fill="#4285f4"/></svg><div class="a" style="left:711px;top:746px;width:16px;height:16px;border-radius:50%;background:linear-gradient(#d9dcea 70%,#4fd0c4 70%);border:1px solid #101010"></div><div class="a" style="left:717px;top:749px;width:5px;height:9px;background:#b8a888;border-radius:2px"></div><div class="a" style="left:693px;top:766px;width:40px;height:2px;background:#76b9ed;"></div><svg class="a" style="left:749px;top:735px" width="26" height="26" viewBox="0 0 26 26"><path d="M2 14 Q1 5 11 4 Q20 4 21 10 Q21 14 17 14 Q13 14 14 18 Q15 22 10 22 Q3 22 2 14 Z" fill="#d9e6ee"/><circle cx="7" cy="11" r="1.8" fill="#e74c3c"/><circle cx="11" cy="8" r="1.8" fill="#2ecc71"/><circle cx="15.5" cy="8.5" r="1.8" fill="#3498db"/><circle cx="6.5" cy="16" r="1.8" fill="#f1c40f"/><path d="M12 20 L24 3 L25.5 4 L14 21 Z" fill="#c98a3a"/><path d="M22 2 L25 0.5 L26 3 Z" fill="#e0b060"/></svg><div class="a" style="left:742px;top:766px;width:40px;height:2px;background:#76b9ed;"></div><svg class="a" style="left:1116px;top:743px" width="13" height="8" viewBox="0 0 13 8"><path d="M0.5 7.5 L6.5 1 L12.5 7.5" fill="none" stroke="#fff" stroke-width="1.3"/></svg><svg class="a" style="left:1140px;top:740px" width="13" height="16" viewBox="0 0 13 16"><rect x="1" y="4" width="9" height="8" rx="1.5" fill="none" stroke="#fff" stroke-width="1.2"/><path d="M10 7 L12.5 5 V11 L10 9" fill="none" stroke="#fff"/><path d="M3 1 H8 M3 15 H8" stroke="#fff"/></svg><svg class="a" style="left:1162px;top:740px" width="18" height="16" viewBox="0 0 18 16"><rect x="4.5" y="0.5" width="13" height="10" fill="none" stroke="#fff"/><rect x="0.5" y="5.5" width="7" height="6" fill="#101010" stroke="#fff"/><path d="M11 10.5 V14 M7 14.5 H15" stroke="#fff"/></svg><svg class="a" style="left:1186px;top:740px" width="17" height="16" viewBox="0 0 17 16"><path d="M1 5.5 H4 L8 1.5 V14.5 L4 10.5 H1 Z" fill="none" stroke="#fff"/><path d="M10.5 5 Q12 8 10.5 11 M13 3 Q15.5 8 13 13 M15 1.5 Q18.5 8 15 14.5" fill="none" stroke="#fff"/></svg><div class="t" style="left:1024.5px;width:400px;text-align:center;top:740.0px;line-height:16px;font-size:11.5px;color:#fff;font-weight:normal;letter-spacing:0px;">ESP</div><div class="t" style="left:1074.5px;width:400px;text-align:center;top:730.5px;line-height:16px;font-size:11.5px;color:#fff;font-weight:normal;letter-spacing:0px;">10:19</div><div class="t" style="left:1074.2px;width:400px;text-align:center;top:748.0px;line-height:16px;font-size:11.5px;color:#fff;font-weight:normal;letter-spacing:0px;">9/4/2024</div><div class="a" style="left:1355px;top:728px;width:1px;height:40px;background:#5a5a5a;"></div><svg class="a" style="left:1319px;top:740px" width="17" height="16" viewBox="0 0 17 16"><path d="M0.5 0.5 H16.5 V11.5 H10 L6 15.5 V11.5 H0.5 Z" fill="none" stroke="#fff"/></svg>
</body></html>
